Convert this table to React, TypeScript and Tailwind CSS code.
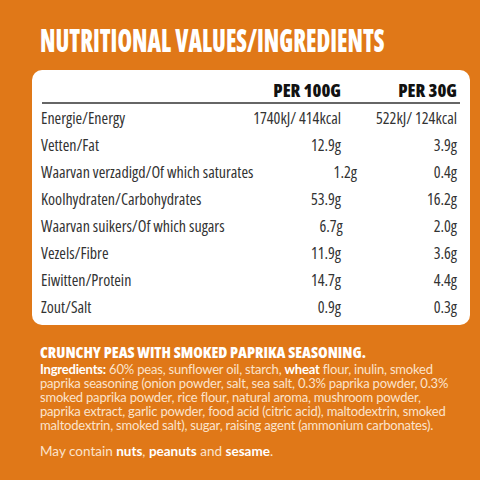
const rows = [
  ['Energie/Energy', '1740kJ/ 414kcal', '522kJ/ 124kcal'],
  ['Vetten/Fat', '12.9g', '3.9g'],
  ['Waarvan verzadigd/Of which saturates', '1.2g', '0.4g'],
  ['Koolhydraten/Carbohydrates', '53.9g', '16.2g'],
  ['Waarvan suikers/Of which sugars', '6.7g', '2.0g'],
  ['Vezels/Fibre', '11.9g', '3.6g'],
  ['Eiwitten/Protein', '14.7g', '4.4g'],
  ['Zout/Salt', '0.9g', '0.3g'],
];

export default function App() {
  return (
    <div className="w-[480px] h-[480px] bg-[#e07818] overflow-hidden [font-family:'Open_Sans',sans-serif]">
      {/* title */}
      <h1 className="ml-[40px] pt-[23px] text-[31px] leading-[34px] font-extrabold text-white [font-stretch:condensed] origin-left scale-x-[0.76] whitespace-nowrap">
        NUTRITIONAL VALUES/INGREDIENTS
      </h1>

      {/* table card */}
      <div className="ml-[32px] mr-[10px] mt-[13px] h-[255px] bg-white rounded-[10px] pl-[9px] pr-[13px] pt-[9px] text-[#333] [font-stretch:condensed]">
        <div className="flex items-end pb-[1px] border-b-2 border-[#666] ml-[1px] mr-[-3px] pr-[3px] text-[18px] leading-[22px] font-extrabold text-[#111]">
          <div className="flex-1" />
          <div className="w-[120px] text-right">PER 100G</div>
          <div className="w-[116px] text-right">PER 30G</div>
        </div>
        <div className="text-[16px]">
          {rows.map(([label, a, b]) => (
            <div key={label} className="flex items-center h-[27px] whitespace-nowrap">
              <div className="flex-1">{label}</div>
              <div className="w-[120px] text-right">{a}</div>
              <div className="w-[116px] text-right">{b}</div>
            </div>
          ))}
        </div>
      </div>

      {/* ingredients */}
      <div className="pl-[40px] pt-[18px] text-white">
        <h2 className="text-[15.5px] leading-[19px] font-extrabold [font-stretch:condensed] whitespace-nowrap">
          CRUNCHY PEAS WITH SMOKED PAPRIKA SEASONING.
        </h2>
        <div className="[font-family:Lato,sans-serif] text-[#fbe3cc] whitespace-nowrap">
          <p className="text-[13px] leading-[14px] tracking-[-0.015em]">
            <b className="text-white">Ingredients:</b> 60% peas, sunflower oil, starch, <b className="text-white">wheat</b> flour, inulin, smoked
            <br />
            paprika seasoning (onion powder, salt, sea salt, 0.3% paprika powder, 0.3%
            <br />
            smoked paprika powder, rice flour, natural aroma, mushroom powder,
            <br />
            paprika extract, garlic powder, food acid (citric acid), maltodextrin, smoked
            <br />
            maltodextrin, smoked salt), sugar, raising agent (ammonium carbonates).
          </p>
          <p className="mt-[12px] text-[13.5px] leading-[14px]">
            May contain <b className="text-white">nuts</b>, <b className="text-white">peanuts</b> and <b className="text-white">sesame</b>.
          </p>
        </div>
      </div>
    </div>
  );
}
